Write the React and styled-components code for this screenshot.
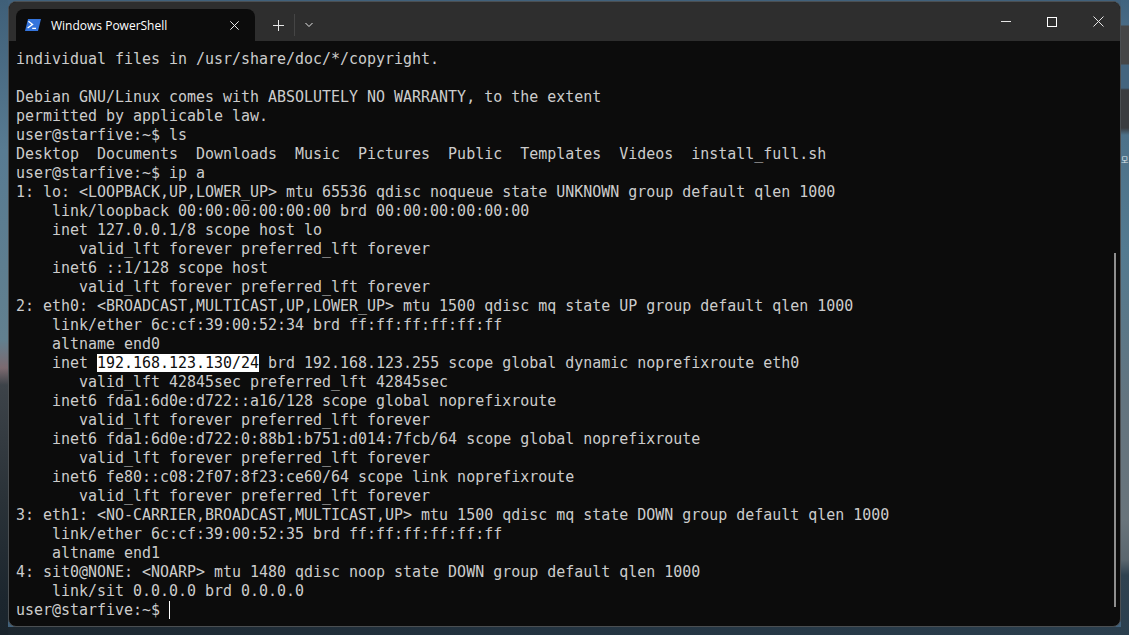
import React from "react";
import styled, { createGlobalStyle } from "styled-components";

const Global = createGlobalStyle`
  html, body { margin: 0; padding: 0; height: 100%; overflow: hidden; }
  #root { height: 100%; }
`;

const Desktop = styled.div`
  position: relative;
  width: 1129px;
  height: 635px;
  overflow: hidden;
  box-sizing: border-box;
  padding: 1px 0 8px 8px;
  background:
    linear-gradient(180deg, #41647f 0, #486a84 25px, #454647 26px, #454647 64px, #44657f 65px, #44657f 88px,
      #3a3c3f 90px, #3a3c3f 128px, #4d7189 135px, #537a90 250px, #63747f 400px, #69747b 520px, #5a666e 560px, #2f4250 575px, #2b3f4e 635px) right top / 8px 635px no-repeat,
    linear-gradient(180deg, #3f5f78 0, #587b92 150px, #62808f 340px, #7c6a70 368px, #3d4349 385px, #2a3238 500px, #1c262e 600px, #1a242c 635px) left top / 8px 635px no-repeat,
    linear-gradient(90deg, #1c262e 0, #233340 500px, #2b3f4e 1129px) left bottom / 100% 8px no-repeat,
    #41617b;
`;

const IconLabel = styled.span`
  position: absolute;
  left: 1121px;
  top: 155px;
  color: #dfe6ea;
  font: 8px/10px "Noto Sans CJK KR", sans-serif;
`;

const Window = styled.div`
  position: relative;
  width: 1113px;
  height: 626px;
  box-sizing: border-box;
  display: flex;
  flex-direction: column;
  background: #0c0c0c;
  border: 1px solid #4b4f52;
  border-radius: 8px;
  overflow: hidden;
`;

const TitleBar = styled.div`
  height: 39px;
  flex: none;
  display: flex;
  background: #2e2e2e;
`;

const Tab = styled.div`
  width: 239px;
  height: 32px;
  margin: 7px 0 0 7px;
  box-sizing: border-box;
  padding: 0 16px 0 9px;
  display: flex;
  align-items: center;
  background: #0c0c0c;
  border-radius: 8px 8px 0 0;
  color: #fff;
  font: 12px "Open Sans", "Inter", sans-serif;
`;

const TabTitle = styled.span`
  flex: 1;
  margin-left: 10px;
`;

const TabActions = styled.div`
  display: flex;
  align-items: center;
  margin: 7px 0 0 18px;
  height: 32px;
  gap: 10px;
`;

const Divider = styled.span`
  width: 1px;
  height: 22px;
  background: #454545;
`;

const Spacer = styled.div`
  flex: 1;
`;

const Controls = styled.div`
  display: flex;
  align-items: center;
  height: 39px;
  padding-right: 16px;
  gap: 36px;
`;

const Body = styled.div`
  flex: 1;
  display: flex;
  min-height: 0;
`;

const Terminal = styled.div`
  flex: 1;
  padding: 9px 0 0 7px;
  color: #cccccc;
  font: 14.96px/19px "DejaVu Sans Mono", monospace;
`;

const Line = styled.div`
  height: 19px;
  white-space: pre;
`;

const Selected = styled.span`
  background: #fff;
  color: #0c0c0c;
`;

const Caret = styled.span`
  display: inline-block;
  width: 1px;
  height: 18px;
  margin-left: 9px;
  background: #fff;
  vertical-align: -4px;
`;

const ScrollTrack = styled.div`
  width: 2px;
  flex: none;
  padding: 212px 0 19px;
  margin-right: 4px;
  box-sizing: border-box;
  display: flex;
`;

const ScrollThumb = styled.div`
  width: 2px;
  background: #8f8f8f;
`;

const LINES = [
  "individual files in /usr/share/doc/*/copyright.",
  "",
  "Debian GNU/Linux comes with ABSOLUTELY NO WARRANTY, to the extent",
  "permitted by applicable law.",
  "user@starfive:~$ ls",
  "Desktop  Documents  Downloads  Music  Pictures  Public  Templates  Videos  install_full.sh",
  "user@starfive:~$ ip a",
  "1: lo: <LOOPBACK,UP,LOWER_UP> mtu 65536 qdisc noqueue state UNKNOWN group default qlen 1000",
  "    link/loopback 00:00:00:00:00:00 brd 00:00:00:00:00:00",
  "    inet 127.0.0.1/8 scope host lo",
  "       valid_lft forever preferred_lft forever",
  "    inet6 ::1/128 scope host",
  "       valid_lft forever preferred_lft forever",
  "2: eth0: <BROADCAST,MULTICAST,UP,LOWER_UP> mtu 1500 qdisc mq state UP group default qlen 1000",
  "    link/ether 6c:cf:39:00:52:34 brd ff:ff:ff:ff:ff:ff",
  "    altname end0",
  ["    inet ", "192.168.123.130/24", " brd 192.168.123.255 scope global dynamic noprefixroute eth0"],
  "       valid_lft 42845sec preferred_lft 42845sec",
  "    inet6 fda1:6d0e:d722::a16/128 scope global noprefixroute",
  "       valid_lft forever preferred_lft forever",
  "    inet6 fda1:6d0e:d722:0:88b1:b751:d014:7fcb/64 scope global noprefixroute",
  "       valid_lft forever preferred_lft forever",
  "    inet6 fe80::c08:2f07:8f23:ce60/64 scope link noprefixroute",
  "       valid_lft forever preferred_lft forever",
  "3: eth1: <NO-CARRIER,BROADCAST,MULTICAST,UP> mtu 1500 qdisc mq state DOWN group default qlen 1000",
  "    link/ether 6c:cf:39:00:52:35 brd ff:ff:ff:ff:ff:ff",
  "    altname end1",
  "4: sit0@NONE: <NOARP> mtu 1480 qdisc noop state DOWN group default qlen 1000",
  "    link/sit 0.0.0.0 brd 0.0.0.0",
];

const PsIcon = () => (
  <svg width="16" height="12" viewBox="0 0 16 12" style={{ flex: "none" }}>
    <path d="M3 0H16L13 12H0Z" fill="#3474dc" />
    <path d="M3.4 2.2L7.6 5.4L2.6 9" stroke="#fff" strokeWidth="1.3" fill="none" />
    <path d="M7.2 9.4H11" stroke="#fff" strokeWidth="1.2" />
  </svg>
);

const Glyph = ({ size = 12, children, color = "#e6e6e6", sw = 1 }) => (
  <svg width={size} height={size} viewBox={`0 0 ${size} ${size}`} fill="none" stroke={color} strokeWidth={sw} style={{ flex: "none" }}>
    {children}
  </svg>
);

export default function App() {
  return (
    <>
      <Global />
      <Desktop>
        <IconLabel>모</IconLabel>
        <Window>
          <TitleBar>
            <Tab>
              <PsIcon />
              <TabTitle>Windows PowerShell</TabTitle>
              <Glyph size={9}><path d="M0.3 0.3L8.7 8.7M8.7 0.3L0.3 8.7" /></Glyph>
            </Tab>
            <TabActions>
              <Glyph size={11}><path d="M5.5 0V11M0 5.5H11" /></Glyph>
              <Divider />
              <Glyph size={8}><path d="M0.5 2L4 5.5L7.5 2" /></Glyph>
            </TabActions>
            <Spacer />
            <Controls>
              <Glyph size={10}><path d="M0 4.5H10" /></Glyph>
              <Glyph size={10} color="#fff"><rect x="0.5" y="0.5" width="9" height="9" /></Glyph>
              <Glyph size={11}><path d="M0.5 0.5L10.5 10.5M10.5 0.5L0.5 10.5" /></Glyph>
            </Controls>
          </TitleBar>
          <Body>
            <Terminal>
              {LINES.map((l, i) =>
                Array.isArray(l) ? (
                  <Line key={i}>
                    {l[0]}
                    <Selected>{l[1]}</Selected>
                    {l[2]}
                  </Line>
                ) : (
                  <Line key={i}>{l}</Line>
                )
              )}
              <Line>
                user@starfive:~$
                <Caret />
              </Line>
            </Terminal>
            <ScrollTrack><ScrollThumb /></ScrollTrack>
          </Body>
        </Window>
      </Desktop>
    </>
  );
}
